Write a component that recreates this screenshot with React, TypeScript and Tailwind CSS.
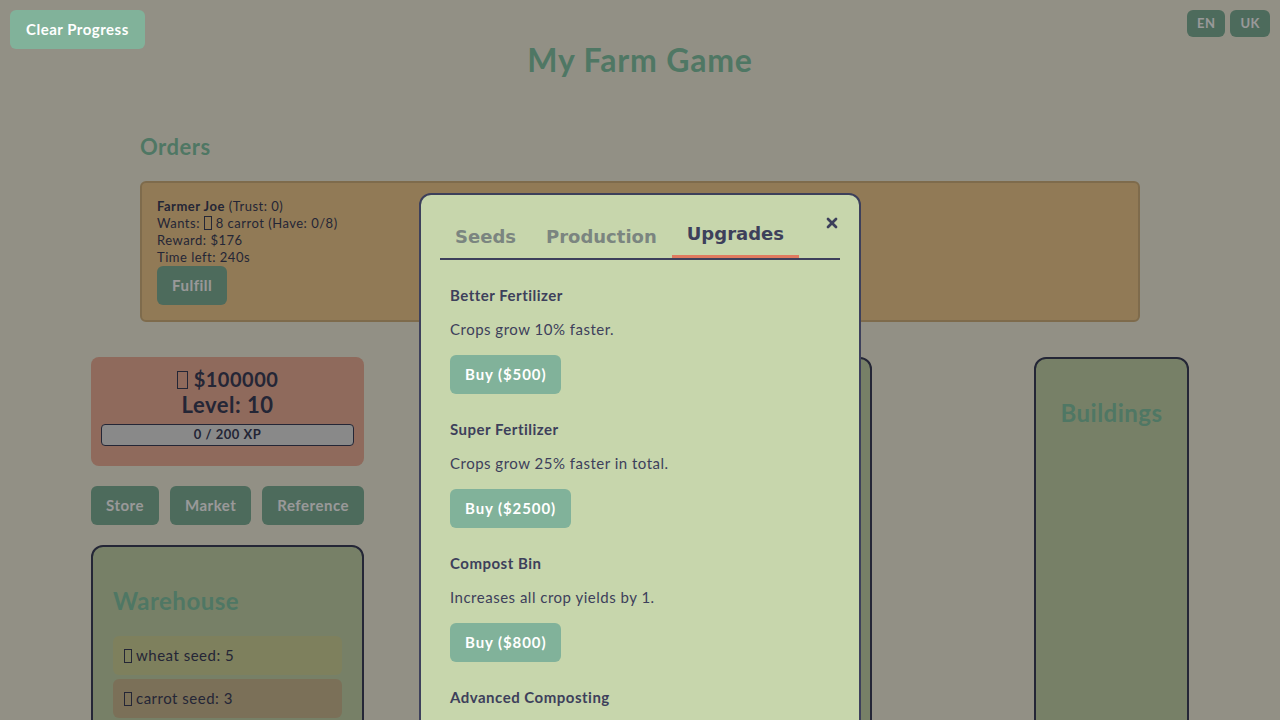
import { X } from 'lucide-react';

const upgrades = [
  { name: 'Better Fertilizer', desc: 'Crops grow 10% faster.', cost: 500 },
  { name: 'Super Fertilizer', desc: 'Crops grow 25% faster in total.', cost: 2500 },
  { name: 'Compost Bin', desc: 'Increases all crop yields by 1.', cost: 800 },
  { name: 'Advanced Composting', desc: 'Increases all crop yields by 2 in total.', cost: 4000 },
];

const font = "font-['Lato','Open_Sans',sans-serif] tracking-[0.5px]";

// The emoji glyphs show up as empty boxes in this build
function Glyph({ big }: { big?: boolean }) {
  return (
    <span
      className={`inline-block border border-current align-[-2px] ${
        big ? 'w-[11px] h-[18px] mr-[6px]' : 'w-[8px] h-[14px] mr-[4px]'
      }`}
    />
  );
}

export default function App() {
  return (
    <div className={`min-h-screen bg-[#f4f1de] text-[#3d405b] ${font}`}>
      {/* Top-left button sits above the overlay */}
      <button className="fixed top-[10px] left-[10px] z-30 h-[39px] px-[16px] rounded-md bg-[#81b29a] text-white text-[15px] font-bold">
        Clear Progress
      </button>

      {/* Language switch */}
      <div className="absolute top-[10px] right-[10px] flex gap-[5px]">
        <button className="h-[27px] px-[10px] rounded-md bg-[#81b29a] text-white text-[13px] font-bold">EN</button>
        <button className="h-[27px] px-[10px] rounded-md bg-[#81b29a] text-white text-[13px] font-bold">UK</button>
      </div>

      <h1 className="pt-[41px] text-center text-[32px] leading-[38px] font-bold tracking-[0.8px] text-[#84c7a7]">My Farm Game</h1>

      {/* Orders */}
      <section className="w-[1000px] mx-auto mt-[55px]">
        <h2 className="text-[22px] leading-[26px] font-bold text-[#84c7a7]">Orders</h2>
        <div className="mt-[21px] h-[141px] rounded-md border-2 border-[#d2b27f] bg-[#f2cc8f] p-[15px] text-[13px] leading-[17px]">
          <div>
            <span className="font-bold">Farmer Joe</span> (Trust: 0)
          </div>
          <div>
            Wants: <Glyph />8 carrot (Have: 0/8)
          </div>
          <div>Reward: $176</div>
          <div>Time left: 240s</div>
          <button className="h-[39px] px-[15px] rounded-md bg-[#81b29a] text-white text-[15px] font-bold">Fulfill</button>
        </div>
      </section>

      {/* Columns */}
      <div className="w-[1098px] mx-auto mt-[35px] flex items-start gap-[162px]">
        <div className="w-[273px] shrink-0">
          <div className="rounded-lg bg-[#eeb199] pt-[10px] pb-[20px] px-[10px] text-center">
            <div className="text-[20px] leading-[24px] font-bold">
              <Glyph big />$100000
            </div>
            <div className="text-[22px] leading-[28px] font-bold">Level: 10</div>
            <div className="mt-[5px] h-[22px] rounded-[4px] border border-[#3d405b] bg-[#e5e5e5] flex items-center justify-center text-[13px] font-bold">
              0 / 200 XP
            </div>
          </div>
          <div className="mt-[20px] flex justify-between">
            {['Store', 'Market', 'Reference'].map((b) => (
              <button key={b} className="h-[39px] px-[15px] rounded-md bg-[#81b29a] text-white text-[15px] font-bold">
                {b}
              </button>
            ))}
          </div>
          <div className="mt-[20px] h-[260px] rounded-xl border-2 border-[#3d405b] bg-[#c7d6ac] px-[20px] pt-[39px]">
            <h2 className="text-[24px] leading-[29px] font-bold text-[#84c7a7]">Warehouse</h2>
            <div className="mt-[21px] flex flex-col gap-[4px]">
              <div className="h-[39px] flex items-center px-[11px] rounded-md bg-[#d2d59b] text-[15px]">
                <Glyph />wheat seed: 5
              </div>
              <div className="h-[39px] flex items-center px-[11px] rounded-md bg-[#cdbb93] text-[15px]">
                <Glyph />carrot seed: 3
              </div>
            </div>
          </div>
        </div>

        <div className="w-[346px] shrink-0 h-[400px] rounded-xl border-2 border-[#3d405b] bg-[#c7d6ac] pt-[40px] text-center">
          <h2 className="text-[24px] leading-[29px] font-bold text-[#84c7a7]">Fields</h2>
        </div>

        <div className="w-[155px] shrink-0 h-[400px] rounded-xl border-2 border-[#3d405b] bg-[#c7d6ac] pt-[39px] text-center">
          <h2 className="text-[24px] leading-[29px] font-bold text-[#84c7a7]">Buildings</h2>
        </div>
      </div>

      {/* Overlay + modal */}
      <div className="fixed inset-0 z-10 bg-black/40" />
      <div className="fixed z-20 top-[193px] left-1/2 -translate-x-1/2 w-[442px] h-[620px] rounded-xl border-2 border-[#3d405b] bg-[#c7d6ac] px-[19px] pt-[18px]">
        <button className="absolute top-[20px] right-[19px] text-[#3d405b]">
          <X size={16} strokeWidth={4} />
        </button>
        <div className="flex items-end border-b-2 border-[#3d405b] font-['DejaVu_Sans',sans-serif] tracking-normal text-[18px] leading-[22px] font-bold">
          <button className="px-[15px] py-[10px] text-[#7b8580]">Seeds</button>
          <button className="px-[15px] py-[10px] text-[#7b8580]">Production</button>
          <button className="px-[15px] pt-[10px] pb-[10px] border-b-[3px] border-[#e07a5f] text-[#3d405b]">Upgrades</button>
        </div>
        <div className="px-[10px] pt-[25px]">
          {upgrades.map((u) => (
            <div key={u.name} className="mb-[25px]">
              <div className="text-[15px] leading-[20px] font-bold">{u.name}</div>
              <div className="mt-[14px] text-[15px] leading-[20px]">{u.desc}</div>
              <button className="mt-[16px] h-[39px] px-[15px] rounded-md bg-[#81b29a] text-white text-[15px] font-bold tracking-[0.9px]">
                Buy (${u.cost})
              </button>
            </div>
          ))}
        </div>
      </div>
    </div>
  );
}
